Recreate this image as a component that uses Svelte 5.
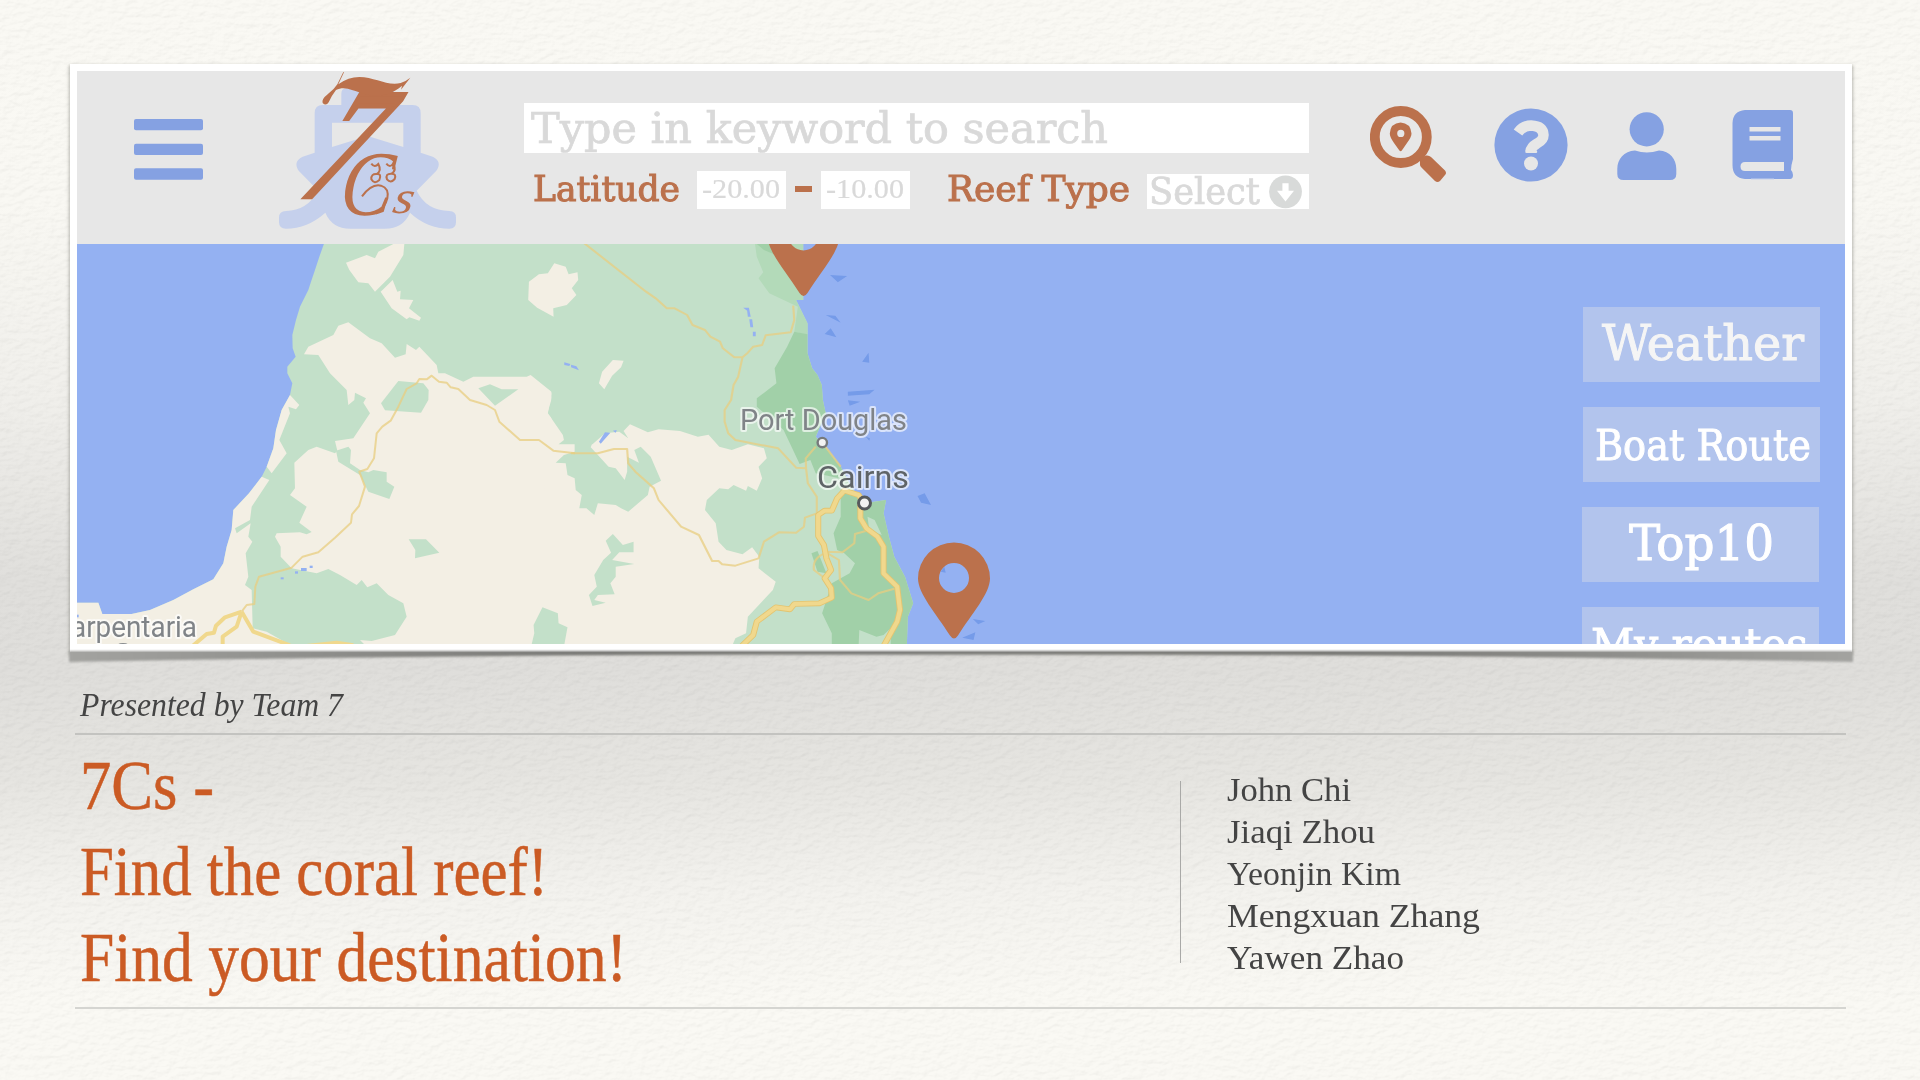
<script>
  const presenters = [
    { name: 'John Chi', width: 124 },
    { name: 'Jiaqi Zhou', width: 148 },
    { name: 'Yeonjin Kim', width: 174 },
    { name: 'Mengxuan Zhang', width: 253 },
    { name: 'Yawen Zhao', width: 177 }
  ];
  const headline = [
    { text: '7Cs -', width: 134 },
    { text: 'Find the coral reef!', width: 468 },
    { text: 'Find your destination!', width: 547 }
  ];
  const actions = [
    { label: 'Weather', width: 202, size: 48, base: 52.5, tone: 'soft', shift: 0, pad: 19 },
    { label: 'Boat Route', width: 216, size: 42, base: 53, tone: '', shift: 0, pad: 12 },
    { label: 'Top10', width: 145, size: 48, base: 53, tone: '', shift: 1, pad: 47 },
    { label: 'My routes', width: 217, size: 42, base: 52, tone: '', shift: 1, pad: 9 }
  ];
</script>

{#snippet fit(text, width, height, base, size, cls)}
  <svg class="fit {cls}" {width} {height}>
    <text x="0" y={base} font-size={size} textLength={width} lengthAdjust="spacingAndGlyphs">{text}</text>
  </svg>
{/snippet}

<div class="slide">
  <svg class="paper" width="1920" height="1080" aria-hidden="true">
    <filter id="grain" x="0" y="0" width="100%" height="100%" color-interpolation-filters="sRGB">
      <feTurbulence type="fractalNoise" baseFrequency="0.11 0.19" numOctaves="4" seed="8" result="n" />
      <feDiffuseLighting in="n" surfaceScale="0.75" lighting-color="#fff" diffuseConstant="1.06">
        <feDistantLight azimuth="235" elevation="66" />
      </feDiffuseLighting>
    </filter>
    <rect width="1920" height="1080" filter="url(#grain)" />
  </svg>

  <section class="frame">
    <svg class="shade" width="1786" height="22" viewBox="0 0 1786 22" aria-hidden="true">
      <defs>
        <linearGradient id="lift" x1="0" x2="1" y1="0" y2="0">
          <stop offset="0" stop-color="#a3a3a0" />
          <stop offset=".3" stop-color="#767673" />
          <stop offset=".7" stop-color="#767673" />
          <stop offset="1" stop-color="#a3a3a0" />
        </linearGradient>
      </defs>
      <path d="M1 0H1785V11Q1300 2 893 3Q480 2 1 11Z" fill="url(#lift)" />
    </svg>
    <div class="screen">
      <header>
        <svg class="menu" width="69" height="61">
          <rect width="69" height="11.3" rx="2" />
          <rect y="24.7" width="69" height="11.3" rx="2" />
          <rect y="49.2" width="69" height="11.5" rx="2" />
        </svg>

        <svg class="logo" width="177" height="160" viewBox="27 18 531 480">
          <path
            class="ship"
            fill-rule="evenodd"
            d="M214 120V86Q214 70 230 70H356Q373 70 373 86V120H428Q452 120 452 145V263L488 275Q518 290 499 317L440 377Q468 436 538 438Q558 438 558 458V472Q558 491 538 491Q472 491 420 443Q399 491 345 491H240Q187 491 166 443Q112 491 48 491Q27 491 27 472V458Q27 438 48 438Q112 436 145 377L86 317Q68 290 98 275L134 263V145Q134 120 158 120ZM186 173V246L293 213L400 246V173Z"
          />
          <g class="mark">
            <text class="seven" transform="matrix(.72 0 -.46 1 84 397)" font-size="470">7</text>
            <path d="M222 22L205 58Q235 36 268 36C314 36 352 64 392 54Q406 50 421 38L393 74L396 62C360 94 320 96 284 87C246 76 224 62 198 75Q186 90 176 112Q168 124 158 114Q154 103 173 88Q192 74 202 58L220 21Z" />
            <text class="cee" transform="matrix(.84 0 -.12 1 204 451)" font-size="278">C</text>
            <text class="ess" transform="matrix(1.15 0 -.2 1 364 445)" font-size="138">s</text>
            <g class="curls">
              <path d="M304 296Q314 310 325 297Q336 318 320 327Q303 326 304 343Q313 359 328 345Q336 325 320 327" />
              <path d="M349 296Q360 310 369 296Q381 316 365 326Q345 325 351 343Q362 356 374 342Q380 326 365 326" />
              <path d="M276 394Q305 355 333 362Q358 370 352 400Q345 430 318 446" />
            </g>
          </g>
        </svg>

        <div class="search">
          <div class="keyword">{@render fit('Type in keyword to search', 577, 50, 40, 43, 'slab pale')}</div>
          <div class="filters">
            {@render fit('Latitude', 147, 38, 30, 36, 'slab rust')}
            <div class="box">{@render fit('-20.00', 78, 38, 27, 28, 'slab pale thin')}</div>
            <span class="dash"></span>
            <div class="box">{@render fit('-10.00', 78, 38, 27, 28, 'slab pale thin')}</div>
            <div class="reef">{@render fit('Reef Type', 183, 38, 30, 36, 'slab rust')}</div>
            <div class="select">
              {@render fit('Select', 111, 35, 30, 37, 'slab pale')}
              <svg width="33" height="35">
                <circle cx="16.5" cy="17.8" r="16.4" fill="#d8dad9" />
                <path d="M13.4 9.3H19.6V16.8H25L16.5 27.4L8 16.8H13.4Z" fill="#fff" />
              </svg>
            </div>
          </div>
        </div>

        <nav>
          <svg class="find" width="76" height="77">
            <circle cx="30.8" cy="31" r="26" fill="none" stroke="#bb714c" stroke-width="9.8" />
            <path d="M50 57L49.7 52L56 49.5Q59 49 61 51L75 64.5Q77 67 75 69L70 75Q67.5 77 65 75L51 61Q49.7 59.5 50 57Z" />
            <path fill-rule="evenodd" d="M30.6 16.5Q40.5 17 41.5 27.5Q41.5 31 37 37L31.8 44.5Q30.6 46 29.4 44.5L24 37Q19.8 31 19.8 27.5Q20.5 17 30.6 16.5ZM30.8 23.8A3.6 3.6 0 1 0 30.8 31A3.6 3.6 0 1 0 30.8 23.8Z" />
          </svg>
          <svg class="help" width="74" height="74">
            <circle cx="37" cy="37" r="36.6" />
            <path d="M24 24.500Q29 17.500 37 17.500Q49 18 49.500 27Q49.500 32 43 35.500Q37 39 36.500 43.500" fill="none" stroke="#e7e7e7" stroke-width="10.5" />
            <path d="M32.500 43.700H42" stroke="#e7e7e7" stroke-width="2.500" stroke-linecap="round" />
            <circle cx="37" cy="55.5" r="7" fill="#e7e7e7" />
          </svg>
          <svg class="user" width="60" height="69">
            <circle cx="29.7" cy="17.3" r="17.1" />
            <path d="M18 38.5Q29.8 42.5 42 38.5C53 39 59.3 47 59.3 57V62Q59.3 68 53 68H6.5Q.3 68 .3 62V57C.3 47 7 39 18 38.5Z" />
          </svg>
          <svg class="book" width="62" height="70">
            <path fill-rule="evenodd" d="M13 0H58Q61 0 61 3V49Q59 55.500 59 60Q61 62 61 65Q61 69 58 69H13Q.5 68 .5 55V13Q1 1 13 0ZM17.500 17V21.500H48.500V17ZM17.500 26V30.500H48.500V26ZM13 52Q8.500 52 8.500 56.500Q8.500 61 13 61H52V52Z" />
            <path d="M19 69H42" stroke="#c5d0ec" />
          </svg>
        </nav>
      </header>

      <div class="map">
        <svg class="chart" width="1768" height="400" viewBox="77 244 1768 400">
          <defs>
            <filter id="soft"><feGaussianBlur stdDeviation=".7" /></filter>
            <path id="pin" fill-rule="evenodd" d="M0 0Q2 0 4 -3C18 -25 36 -45 36 -60A36 36 0 0 0 -36 -60C-36 -45 -18 -25 -4 -3Q-2 0 0 0ZM0 -45.500A15 15 0 1 1 0 -75.500A15 15 0 1 1 0 -45.500Z" />
          </defs>
          <g filter="url(#soft)">
            <g transform="translate(60 240) scale(.33333)">
              <path class="green" d="M793 8L778 50L765 90L753 125L745 150L720 200L708 240L697 285L698 325L707 350L682 380L682 400L697 430L690 465L665 510L648 570L640 625L620 680L605 710L567 760L520 810L515 870L500 920L490 970L460 1018L400 1048L340 1080L270 1110L215 1122H127L115 1088H45V1220H1560V8Z" />
              <path class="sand" d="M690 465L718 495L708 508L685 500L690 520L658 600L680 640L635 700L620 680L640 625L648 570L665 510Z" />
              <path class="sand" d="M605 710L628 720L575 800L570 840L525 865L530 880L572 850L565 890L577 905L557 940L565 1010L555 1035L575 1050L578 1165L620 1175L700 1220H45V1088H115L127 1122H215L270 1110L340 1080L400 1048L460 1018L490 970L500 920L515 870L520 810L567 760Z" />
              <path class="sand" d="M732 343L745 320L820 285L835 257L865 247L930 295L965 310L1005 353L1037 343L1040 312L1068 330L1078 320L1130 375L1135 400L1155 400L1210 425L1240 410L1400 410L1412 405L1480 460L1462 520L1500 565V1220H920L900 1200L935 1203L1005 1185L1040 1130L1030 1090L985 1065L950 1030L922 1042L905 1020L890 1035L840 1005L805 987L770 1000L695 985L662 950V920L645 890L650 880L720 877L740 883L755 876L718 848L740 800L690 765L705 745L703 668L745 630L770 620L825 640L832 632L825 603L880 595L930 520L910 488L918 475L885 458L883 480L865 495L860 450L810 400L775 345Z" />
              <path class="sand" d="M858 68L920 45L945 55L955 35L1000 12H1033L1030 45L990 110L945 155L925 130L895 127L868 90Z" />
              <path class="sand" d="M998 120L1012 155L1022 152L1020 178L1060 180L1047 205L1083 233L1078 242L1048 232L1040 238L995 205L962 155Z" />
              <path class="green" d="M1015 423L1090 430L1106 450L1105 480L1083 518L975 511L963 490Z" />
              <path class="green" d="M1255 445L1290 433L1325 448L1375 448L1305 497Z" />
              <path class="green" d="M828 632L865 620L873 630L870 670L900 690L925 697L940 690L980 697V725L1003 740L988 777L925 755L900 705L835 665Z" />
              <path class="green" d="M1046 898H1098L1138 938L1065 955L1066 930Z" />
              <g class="lake"><rect x="662" y="1012" width="9" height="6" /><rect x="705" y="994" width="9" height="7" /><rect x="723" y="984" width="17" height="9" /><rect x="749" y="977" width="9" height="7" /><rect x="48" y="1124" width="8" height="8" /></g>
            </g>
            <g transform="translate(480 240) scale(.35714 .33333)">
              <path class="green" d="M200 8H905V180H885L917 250V340L930 385L945 405L957 435L960 480L968 520L940 590L975 630L1010 680L1040 740L1075 790L1137 780L1130 820L1145 890L1160 950L1190 1010L1213 1090L1198 1130L1195 1220H200Z" />
              <path class="sand" d="M200 460L190 520L232 585L235 600L220 613L315 613L350 580L390 575L415 595L402 573L420 553L470 577L500 568L560 573L610 590L640 584L670 620L705 630L750 613L795 625L803 655L780 680L790 715L775 752L750 738L745 752L710 735L695 748L670 745L635 780L630 810L660 850L668 905L690 930L735 943L762 922L782 950L780 985L828 1025L820 1050L750 1130L745 1180L715 1195L705 1220H180V460Z" />
              <path class="green" d="M265 600H318L310 622L330 645L360 680L380 685L405 720L412 695V650L445 668L432 630L450 620L478 650L507 722L475 740L470 765L415 815L395 805L380 795L330 790L320 825L298 805L278 805L285 765L268 750L265 715L245 705L240 670L212 668L235 645L265 635Z" />
              <path class="green" d="M372 882L400 915L430 905V937L390 937L370 960L432 972L380 980V1010L365 1030L377 1063L330 1065L320 1080L352 1088L315 1098L305 1065L327 1040L320 1005L345 960L367 938L352 902Z" />
              <path class="green" d="M175 1102L218 1120L220 1150L245 1162L235 1220H143L152 1180L150 1155Z" />
              <path class="sand" d="M208 70L240 80L248 103L273 97L275 120L257 145L270 165L243 195L205 205L206 230L160 203L135 180L137 125L165 103L190 100Z" />
              <path class="sand" d="M372 360L402 362L395 382L370 407L348 448L333 430L342 395Z" />
              <path class="mid" d="M770 12H905V180H885L917 250V285L880 275L890 200L850 180L810 160L780 115L793 97L775 50Z" />
              <path class="dark" d="M775 12H815L835 48L795 30Z" />
              <path class="dark" d="M880 275L917 283V340L930 385L945 405L957 435L960 480L968 520L940 590L975 630L1010 680L1030 720L940 700L925 660L895 672L850 570L775 500V475L830 430L825 385L860 320Z" />
              <path class="dark" d="M1010 755L1060 770L1075 790L1137 780L1130 820L1145 890L1160 950L1190 1010L1213 1090L1198 1130L1195 1220H985L985 1180L958 1120L985 1030L1035 1000L1050 970L1020 940L1000 930L990 880L1010 830Z" />
              <path class="dark" d="M928 940L945 933L970 1000L945 995Z" />
              <path class="green" d="M1060 1220L1062 1170L1110 1190L1130 1185L1150 1165V1220ZM1085 830L1105 840L1125 885L1090 870Z" />
              <g class="lake">
                <path d="M737 203H753L758 230H750L748 212ZM754 238H762L765 262H757ZM764 275H772V289H764ZM236 367L253 372L250 378L236 375ZM255 374L270 379L277 391L255 382ZM333 605L350 577L365 578L338 611ZM372 572L383 570L380 578Z" />
              </g>
              <g class="reefs">
                <path d="M980 105L1028 108L1002 127ZM968 225L995 227L1010 248ZM965 282L982 265L998 292ZM1070 365L1088 338L1090 368ZM1030 455L1105 449L1090 463L1030 467ZM1030 481L1065 485L1035 497ZM1225 768L1245 760L1263 795L1235 788ZM1380 1137L1415 1143L1395 1153ZM1350 1193L1387 1177L1382 1200ZM1290 995L1300 980L1304 998ZM1080 590L1092 595L1090 602Z" />
              </g>
            </g>
            <g class="roads">
              <g transform="translate(60 240) scale(.33333)">
                <path d="M545 1115L560 1095L583 1092L586 1040L597 1010L695 983L728 950L775 937L825 893L873 848L876 823L897 798L915 740L898 695L922 687L942 655L950 580L967 560L992 542L1015 500L1040 447L1070 430L1078 417L1100 418L1115 407L1137 425L1160 428L1172 442L1195 447L1230 480L1280 495L1305 510L1318 545L1380 600H1437L1480 632L1545 640" />
                <g class="main"><path d="M545 1115L495 1132L468 1157L462 1178L440 1182L395 1220M545 1115L530 1160L488 1190V1220M545 1115L580 1175L690 1216M740 1218L830 1208L880 1216" /></g>
              </g>
              <g transform="translate(480 240) scale(.35714 .33333)">
                <path d="M292 10L465 155L492 175L523 205H545L580 225L595 255L630 270L645 290L672 305L680 325L712 352H735L750 338L765 320L790 315L800 286L870 277L880 240L877 197M735 352L723 410L710 435L703 480L685 510V545L695 580L715 600L835 625L885 683L913 685L912 655L940 620M958 607L1010 680M913 685L918 730L943 770V820L910 833L907 860L885 878L837 877L795 905L780 955L715 977L678 973L668 963H650L613 885L563 860L500 780L487 745L435 695L415 670L412 627H375L330 640H255" />
                <path d="M965 935L1015 937L1048 910L1050 882L1080 873M965 935L1005 960L1008 1020L1040 1060L1088 1080L1115 1060L1165 1045M965 940Q930 955 935 990L960 1010" />
                <g class="main casing"><path d="M1075 790L1060 765L1020 752L1000 775L985 812H965L947 825V888L963 915L970 955L983 990L965 1015L983 1045L985 1073L950 1090L880 1092L868 1108L828 1102L775 1145L765 1185L733 1218M1065 790V835L1082 865L1113 890L1130 920V1000L1168 1040L1176 1110L1168 1145L1130 1218" /></g>
                <g class="main"><path d="M1075 790L1060 765L1020 752L1000 775L985 812H965L947 825V888L963 915L970 955L983 990L965 1015L983 1045L985 1073L950 1090L880 1092L868 1108L828 1102L775 1145L765 1185L733 1218M1065 790V835L1082 865L1113 890L1130 920V1000L1168 1040L1176 1110L1168 1145L1130 1218" /></g>
              </g>
            </g>
          </g>
          <g class="towns">
            <text x="740" y="430" font-size="29" textLength="167" lengthAdjust="spacingAndGlyphs">Port Douglas</text>
            <text class="city" x="817" y="488" font-size="31" textLength="92" lengthAdjust="spacingAndGlyphs">Cairns</text>
            <text x="71" y="636.500" font-size="29" textLength="126" lengthAdjust="spacingAndGlyphs">arpentaria</text>
          </g>
          <circle cx="822.300" cy="442.600" r="4.700" class="stop" />
          <circle cx="864.500" cy="503" r="6" class="stop big" />
          <ellipse cx="123" cy="645" rx="5" ry="2" fill="#888c8f" />
          <use href="#pin" x="954" y="638.500" class="pin" />
          <use href="#pin" x="803.500" y="296" class="pin" />
        </svg>
        <div class="actions">
          {#each actions as a}
            <div class="action" style:margin-left="{-a.shift}px" style:padding-left="{a.pad}px">
              {@render fit(a.label, a.width, 75, a.base, a.size, 'slab white ' + a.tone)}
            </div>
          {/each}
        </div>
      </div>
    </div>
  </section>

  <section class="caption">
    <div class="by">{@render fit('Presented by Team 7', 263, 44, 28, 33, 'book-face italic')}</div>
    <div class="body">
      <div class="headline">
        {#each headline as line}
          {@render fit(line.text, line.width, 86, 58, 70, 'title')}
        {/each}
      </div>
      <div class="names">
        {#each presenters as p}
          {@render fit(p.name, p.width, 42, 20, 33, 'book-face')}
        {/each}
      </div>
    </div>
  </section>
</div>

<style>
  :global(body) { margin: 0; overflow: hidden; }
  svg { display: block; flex: none; }
  .slide {
    position: relative;
    box-sizing: border-box;
    width: 1920px;
    height: 1080px;
    padding: 64px 68px 0 70px;
    overflow: hidden;
    background: linear-gradient(#faf9f4 0, #f9f8f3 200px, #f0efeb 400px, #e0dfdc 580px, #dfdedb 670px, #e6e5e1 780px, #f3f2ee 890px, #faf9f4 1000px);
  }
  .paper { position: absolute; inset: 0; mix-blend-mode: multiply; opacity: .22; }
  .fit { overflow: visible; }
  .frame {
    position: relative;
    box-sizing: border-box;
    width: 1782px;
    height: 588px;
    padding: 7px;
    background: #fff;
    box-shadow: 0 2px 3px 1px rgba(90, 90, 80, .4);
  }
  .shade { position: absolute; left: -2px; top: 587px; filter: blur(.8px); }
  .screen { position: relative; width: 1768px; height: 573px; overflow: hidden; }
  header { display: flex; align-items: flex-start; height: 173px; background: #e7e7e7; }
  .menu { margin: 48px 0 0 57px; fill: #85a1e2; }
  .logo { margin-left: 76px; overflow: visible; }
  .ship { fill: #c5d0ec; }
  .mark { fill: #bb714c; font-family: 'Liberation Serif', serif; font-style: italic; }
  .seven { stroke: #bb714c; stroke-width: 14; }
  .curls { fill: none; stroke: #bb714c; stroke-width: 6; }
  .search { width: 785px; margin: 32px 0 0 68px; }
  .keyword { height: 50px; padding-left: 7px; background: #fff; }
  .filters { display: flex; align-items: flex-start; height: 38px; margin-top: 18px; padding-left: 9px; }
  .box { box-sizing: border-box; width: 89px; height: 38px; padding-left: 5px; background: #fff; }
  .filters > .box { margin-left: 17px; }
  .filters > .dash + .box { margin-left: 9px; }
  .dash { width: 17px; height: 6px; margin: 15px 0 0 9px; background: #bb714c; }
  .reef { margin: 0 17px 0 37px; }
  .select { display: flex; gap: 9px; box-sizing: border-box; width: 162px; height: 35px; margin-top: 3px; padding-left: 2px; background: #fff; }
  .slab { font-family: 'DejaVu Serif Condensed', 'DejaVu Serif', serif; font-stretch: condensed; }
  .pale { fill: #d9d9d9; stroke: #d9d9d9; stroke-width: .7; }
  .thin { font-family: 'Liberation Serif', serif; stroke-width: .2; }
  .rust { fill: #bb714c; stroke: #bb714c; stroke-width: 1; }
  .white { fill: #fff; stroke: #fff; stroke-width: .9; }
  .soft { fill: #f5f5f5; stroke: #f5f5f5; }
  nav { display: flex; align-items: flex-start; margin: 35px 0 0 61px; fill: #85a1e2; }
  .find { fill: #bb714c; }
  .help { margin: 1.5px 0 0 47.5px; }
  .user { margin: 6px 0 0 49.5px; }
  .book { margin: 4px 0 0 55px; }
  .map { position: relative; height: 400px; overflow: hidden; background: #94b1f2; }
  .green { fill: #c3e0c9; }
  .sand { fill: #f3efe4; }
  .mid { fill: #b3dab9; }
  .dark { fill: #a1d0a8; }
  .lake { fill: #94b1f2; }
  .reefs { fill: #759be9; }
  .roads { fill: none; stroke: #e8cd80; stroke-width: 6; stroke-opacity: .75; stroke-linejoin: round; }
  .main { stroke: #f0d88d; stroke-width: 12; stroke-opacity: 1; }
  .casing { stroke: #e3c470; stroke-width: 17; }
  .towns { font-family: Roboto, sans-serif; fill: #808488; stroke: rgba(255, 255, 255, .65); stroke-width: 4; paint-order: stroke; stroke-linejoin: round; }
  .city { fill: #5f6467; }
  .stop { fill: #f3f3f3; stroke: #777a7c; stroke-width: 2.4; }
  .big { stroke: #565a5d; stroke-width: 3; }
  .pin { fill: #bb714c; }
  .actions { position: absolute; top: 63px; left: 1506px; display: flex; flex-direction: column; gap: 25px; }
  .action { box-sizing: border-box; width: 237px; height: 75px; background: #b2c4ed; }
  .caption { position: relative; width: 1771px; margin: 36px 0 0 5px; }
  .by { height: 45px; padding-left: 5px; border-bottom: 2px solid #c3c3c0; }
  .book-face { fill: #444; font-family: 'Palatino Linotype', Palatino, 'Liberation Serif', serif; }
  .italic { font-style: italic; }
  .body { display: flex; justify-content: space-between; box-sizing: border-box; height: 274px; border-bottom: 2px solid #d5d5d1; }
  .headline { padding: 16px 0 0 5px; }
  .title { fill: #cb5b24; stroke: #cb5b24; stroke-width: .5; font-family: 'Liberation Serif', serif; }
  .names { box-sizing: border-box; width: 666px; height: 182px; margin-top: 46px; padding-left: 46px; border-left: 1px solid #a9a9a7; }
</style>
